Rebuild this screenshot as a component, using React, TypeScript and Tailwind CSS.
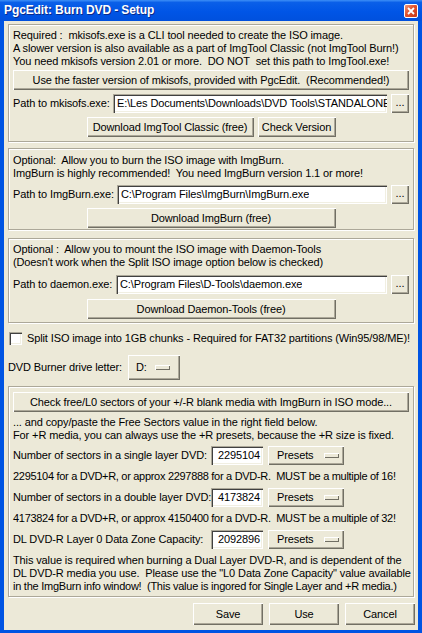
import React from "react";

const btn =
  "bg-[#ECE9D8] shadow-[inset_1px_1px_#ffffff,inset_-1px_-1px_#716f64,inset_-2px_-2px_#aca899] flex items-center justify-center text-black whitespace-nowrap";
const sunken =
  "bg-white shadow-[inset_1px_1px_#aca899,inset_2px_2px_#404040,inset_-1px_-1px_#ffffff,inset_-2px_-2px_#f1efe2]";
const group =
  "border border-[#aca899] shadow-[inset_1px_1px_#ffffff,1px_1px_#ffffff] px-[4px]";

function Indicator() {
  return (
    <span className="inline-block w-[15px] h-[5px] shrink-0 bg-[#ECE9D8] shadow-[inset_1px_1px_#ffffff,inset_-1px_-1px_#716f64]" />
  );
}

function PathRow({ label, labelW, value }: { label: string; labelW: string; value: string }) {
  return (
    <div className="flex items-center h-[19px]">
      <span className={`${labelW} shrink-0 whitespace-nowrap`}>{label}</span>
      <div className={`${sunken} flex-1 min-w-0 h-[19px] flex items-center pl-[4px] overflow-hidden whitespace-nowrap`}>
        <span className="overflow-hidden">{value}</span>
      </div>
      <div className={`${btn} ml-[4px] w-[18px] h-[19px] shrink-0`}>
        <span className="-mt-[2px]">...</span>
      </div>
    </div>
  );
}

function NumRow({ label, value }: { label: string; value: string }) {
  return (
    <div className="flex items-center h-[19px]">
      <span className="w-[198px] shrink-0 whitespace-nowrap">{label}</span>
      <div className={`${sunken} w-[52px] h-[19px] flex items-center justify-end pr-[3px]`}>{value}</div>
      <div className={`${btn} ml-[5px] w-[76px] h-[19px] !justify-start pl-[9px] gap-[11px]`}>
        <span>Presets</span>
        <Indicator />
      </div>
    </div>
  );
}

export default function App() {
  return (
    <div className="w-[422px] h-[633px] bg-[#0054E3] flex flex-col [font-family:'Liberation_Sans',Arial,sans-serif] text-[11px] leading-[13px] tracking-[-0.12px] text-black overflow-hidden">
      {/* Title bar */}
      <div className="h-[21px] shrink-0 flex items-center justify-between pl-[4px] pr-[4px] bg-[linear-gradient(180deg,#3d8ff7_0%,#0a5fe8_12%,#0055e6_55%,#0050dd_100%)]">
        <span className="text-white font-bold text-[12px] tracking-[-0.1px] [text-shadow:1px_1px_#0a2a8a] whitespace-nowrap">
          PgcEdit: Burn DVD - Setup
        </span>
        <div className="w-[14px] h-[14px] rounded-[2px] border border-white bg-[linear-gradient(135deg,#f09a7c_0%,#e2522c_45%,#c8391a_100%)] flex items-center justify-center">
          <svg width="8" height="8" viewBox="0 0 8 8">
            <path d="M1 1 L7 7 M7 1 L1 7" stroke="white" strokeWidth="1.8" />
          </svg>
        </div>
      </div>

      {/* Body */}
      <div className="flex-1 mx-[4px] mb-[3px] bg-[#ECE9D8] px-[4px] flex flex-col whitespace-nowrap">
        {/* Group 1 */}
        <div className={`${group} mt-[3px] pt-[4px] pb-[4px]`}>
          <div>Required :&nbsp; mkisofs.exe is a CLI tool needed to create the ISO image.</div>
          <div>A slower version is also available as a part of ImgTool Classic (not ImgTool Burn!)</div>
          <div>You need mkisofs version 2.01 or more.&nbsp; DO NOT&nbsp; set this path to ImgTool.exe!</div>
          <div className={`${btn} mt-[2px] h-[20px]`}>
            Use the faster version of mkisofs, provided with PgcEdit.&nbsp; (Recommended!)
          </div>
          <div className="mt-[4px]">
            <PathRow
              label="Path to mkisofs.exe:"
              labelW="w-[100px]"
              value="E:\Les Documents\Downloads\DVD Tools\STANDALONE\mkisofs.exe"
            />
          </div>
          <div className="mt-[4px] flex justify-center gap-[4px]">
            <div className={`${btn} w-[167px] h-[20px]`}>Download ImgTool Classic (free)</div>
            <div className={`${btn} w-[78px] h-[20px]`}>Check Version</div>
          </div>
        </div>

        {/* Group 2 */}
        <div className={`${group} mt-[6px] pt-[5px] pb-[1px]`}>
          <div>Optional:&nbsp; Allow you to burn the ISO image with ImgBurn.</div>
          <div>ImgBurn is highly recommended!&nbsp; You need ImgBurn version 1.1 or more!</div>
          <div className="mt-[5px]">
            <PathRow label="Path to ImgBurn.exe:" labelW="w-[104px]" value="C:\Program Files\ImgBurn\ImgBurn.exe" />
          </div>
          <div className="mt-[4px] flex justify-center">
            <div className={`${btn} w-[249px] h-[20px]`}>Download ImgBurn (free)</div>
          </div>
        </div>

        {/* Group 3 */}
        <div className={`${group} mt-[8px] pt-[4px] pb-[3px]`}>
          <div>Optional :&nbsp; Allow you to mount the ISO image with Daemon-Tools</div>
          <div>(Doesn't work when the Split ISO image option below is checked)</div>
          <div className="mt-[6px]">
            <PathRow label="Path to daemon.exe:" labelW="w-[103px]" value="C:\Program Files\D-Tools\daemon.exe" />
          </div>
          <div className="mt-[5px] flex justify-center">
            <div className={`${btn} w-[249px] h-[20px]`}>Download Daemon-Tools (free)</div>
          </div>
        </div>

        {/* Checkbox */}
        <div className="mt-[9px] flex items-center h-[13px] ml-[1px]">
          <span className={`${sunken} w-[13px] h-[13px] shrink-0`} />
          <span className="ml-[5px] whitespace-nowrap">
            Split ISO image into 1GB chunks - Required for FAT32 partitions (Win95/98/ME)!
          </span>
        </div>

        {/* Drive letter */}
        <div className="mt-[10px] flex items-center">
          <span className="w-[120px] shrink-0">DVD Burner drive letter:</span>
          <div className={`${btn} w-[52px] h-[25px] !justify-start pl-[8px] gap-[8px]`}>
            <span>D:</span>
            <Indicator />
          </div>
        </div>

        {/* Group 4 */}
        <div className={`${group} mt-[6px] pt-[5px] pb-[3px]`}>
          <div className={`${btn} h-[20px]`}>
            Check free/L0 sectors of your +/-R blank media with ImgBurn in ISO mode...
          </div>
          <div className="mt-[4px]">... and copy/paste the Free Sectors value in the right field below.</div>
          <div>For +R media, you can always use the +R presets, because the +R size is fixed.</div>
          <div className="mt-[4px]">
            <NumRow label="Number of sectors in a single layer DVD:" value="2295104" />
          </div>
          <div className="mt-[5px] tracking-[-0.3px]">2295104 for a DVD+R, or approx 2297888 for a DVD-R.&nbsp; MUST be a multiple of 16!</div>
          <div className="mt-[5px]">
            <NumRow label="Number of sectors in a double layer DVD:" value="4173824" />
          </div>
          <div className="mt-[5px] tracking-[-0.3px]">4173824 for a DVD+R, or approx 4150400 for a DVD-R.&nbsp; MUST be a multiple of 32!</div>
          <div className="mt-[5px]">
            <NumRow label="DL DVD-R Layer 0 Data Zone Capacity:" value="2092896" />
          </div>
          <div className="mt-[5px]">
            <div>This value is required when burning a Dual Layer DVD-R, and is dependent of the</div>
            <div>DL DVD-R media you use.&nbsp; Please use the "L0 Data Zone Capacity" value available</div>
            <div className="tracking-[-0.25px]">in the ImgBurn info window!&nbsp; (This value is ingored for Single Layer and +R media.)</div>
          </div>
        </div>

        {/* Bottom buttons */}
        <div className="mt-[6px] flex justify-end gap-[6px] -mr-[1px]">
          <div className={`${btn} w-[70px] h-[22px]`}>Save</div>
          <div className={`${btn} w-[70px] h-[22px]`}>Use</div>
          <div className={`${btn} w-[70px] h-[22px]`}>Cancel</div>
        </div>
      </div>
    </div>
  );
}
